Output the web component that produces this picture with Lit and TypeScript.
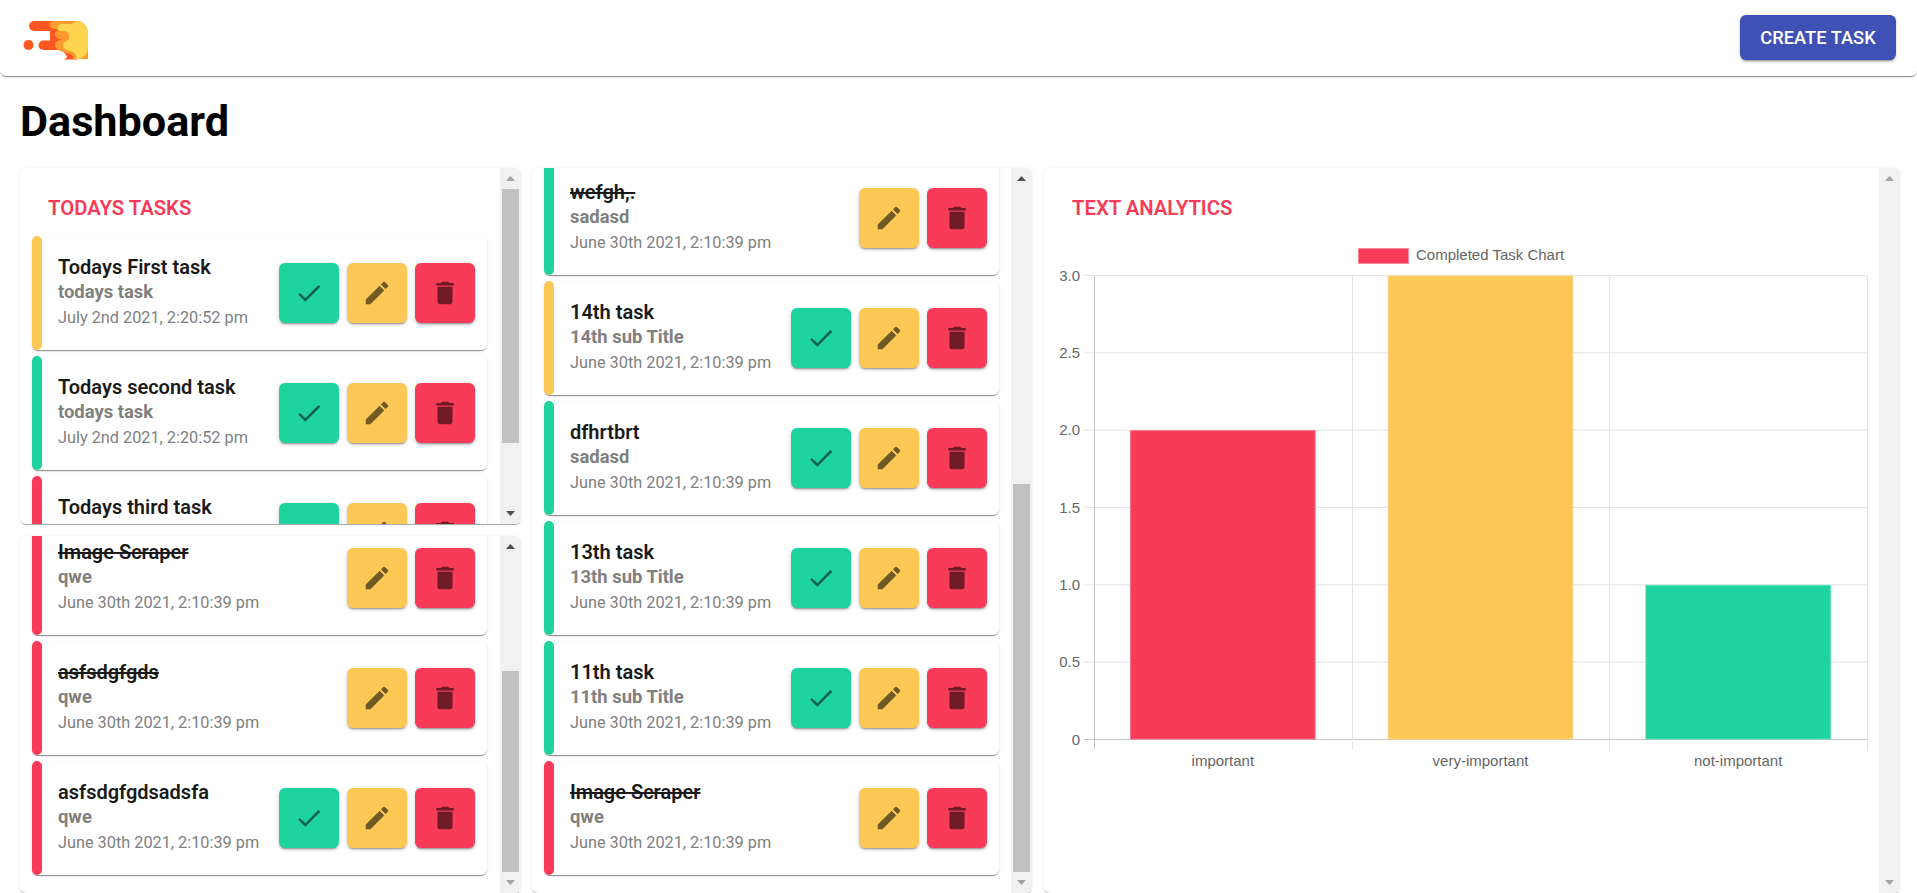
import { LitElement, html, css, svg } from "lit";
import { customElement } from "lit/decorators.js";

type Task = { title: string; sub: string; date: string; tone: "red" | "yellow" | "green"; done?: boolean };
type Thumb = { before: number; size: number; after: number };

const J30 = "June 30th 2021, 2:10:39 pm";
const J2 = "July 2nd 2021, 2:20:52 pm";

const todays: Task[] = [
  { title: "Todays First task", sub: "todays task", date: J2, tone: "yellow" },
  { title: "Todays second task", sub: "todays task", date: J2, tone: "green" },
  { title: "Todays third task", sub: "todays task", date: J2, tone: "red" },
];
const important: Task[] = [
  { title: "Image Scraper", sub: "qwe", date: J30, tone: "red", done: true },
  { title: "asfsdgfgds", sub: "qwe", date: J30, tone: "red", done: true },
  { title: "asfsdgfgdsadsfa", sub: "qwe", date: J30, tone: "red" },
];
const all: Task[] = [
  { title: "wefgh,.", sub: "sadasd", date: J30, tone: "green", done: true },
  { title: "14th task", sub: "14th sub Title", date: J30, tone: "yellow" },
  { title: "dfhrtbrt", sub: "sadasd", date: J30, tone: "green" },
  { title: "13th task", sub: "13th sub Title", date: J30, tone: "green" },
  { title: "11th task", sub: "11th sub Title", date: J30, tone: "green" },
  { title: "Image Scraper", sub: "qwe", date: J30, tone: "red", done: true },
];

const CHECK = "M9 16.17L4.83 12l-1.42 1.41L9 19 21 7l-1.41-1.41z";
const EDIT =
  "M3 17.25V21h3.75L17.81 9.94l-3.75-3.75L3 17.25zM20.71 7.04c.39-.39.39-1.02 0-1.41l-2.34-2.34c-.39-.39-1.02-.39-1.41 0l-1.83 1.83 3.75 3.75 1.83-1.83z";
const TRASH = "M6 19c0 1.1.9 2 2 2h8c1.1 0 2-.9 2-2V7H6v12zM19 4h-3.5l-1-1h-5l-1 1H5v2h14V4z";

const bars = [
  { label: "important", value: 2, color: "#f73b58", edge: "#fb6f85" },
  { label: "very-important", value: 3, color: "#fdc855", edge: "#fdd27a" },
  { label: "not-important", value: 1, color: "#1fd3a0", edge: "#57dfb8" },
];

const PLOT = { left: 50, right: 823, top: 39.5, bottom: 503.5 };

function chart() {
  const w = (PLOT.right - PLOT.left) / 3;
  const h = PLOT.bottom - PLOT.top;
  const ticks = [0, 0.5, 1, 1.5, 2, 2.5, 3];
  return svg`
    <rect x="314.5" y="12.5" width="50" height="15" fill="#f73b58" stroke="#fb8a9c"></rect>
    <text x="372" y="24" class="tick" text-anchor="start">Completed Task Chart</text>
    ${ticks.map((t) => {
      const y = PLOT.bottom - (t / 3) * h;
      return svg`
        <line x1="${PLOT.left - 10}" x2="${PLOT.right}" y1="${y}" y2="${y}" stroke="${t === 0 ? "#c4c4c4" : "#e3e3e3"}"></line>
        <text x="${PLOT.left - 14}" y="${y + 5}" class="tick" text-anchor="end">${t === 0 ? "0" : t.toFixed(1)}</text>`;
    })}
    ${[0, 1, 2, 3].map((i) => {
      const x = Math.round(PLOT.left + i * w) + 0.5;
      return svg`<line x1="${x}" x2="${x}" y1="${PLOT.top}" y2="${PLOT.bottom + 10}" stroke="${i === 0 ? "#c4c4c4" : "#e3e3e3"}"></line>`;
    })}
    ${bars.map((b, i) => {
      const bw = w * 0.72;
      const x = PLOT.left + i * w + (w - bw) / 2;
      const bh = (b.value / 3) * h;
      return svg`
        <rect x="${x + 0.5}" y="${PLOT.bottom - bh + 0.5}" width="${bw - 1}" height="${bh - 1}" fill="${b.color}" stroke="${b.edge}"></rect>
        <text x="${PLOT.left + i * w + w / 2}" y="530" class="tick" text-anchor="middle">${b.label}</text>`;
    })}
  `;
}

@customElement("task-card")
class TaskCard extends LitElement {
  static properties = { task: { attribute: false } };
  task!: Task;
  static styles = css`
    :host { display: block; flex: none; width: 455px; margin-bottom: 6px; }
    .card {
      display: flex; align-items: center; height: 114px; box-sizing: border-box;
      background: #fff; border-radius: 6px; padding-right: 12px;
      box-shadow: 0 2px 1px -1px rgba(0,0,0,.3), 0 1px 1px 0 rgba(0,0,0,.14), 0 1px 3px 0 rgba(0,0,0,.12);
    }
    .bar { width: 10px; height: 100%; border-radius: 6px; flex: none; margin-right: 16px; }
    .red { background: #f73b58; }
    .yellow { background: #fdc855; }
    .green { background: #1fd3a0; }
    .text { flex: 1; min-width: 0; font-family: Roboto, sans-serif; line-height: 25px; white-space: nowrap; margin-top: -2px; }
    .title { font-size: 20px; font-weight: 600; color: #1a1a1a; }
    .done { text-decoration: line-through; }
    .sub { font-size: 18.4px; font-weight: 700; color: #808080; line-height: 24px; margin-bottom: 1px; }
    .date { font-size: 16.3px; color: #808080; }
    .actions { display: flex; gap: 8px; flex: none; }
    .btn {
      width: 60px; height: 60px; border: 0; padding: 0; border-radius: 6px;
      display: flex; align-items: center; justify-content: center;
      box-shadow: 0 3px 1px -2px rgba(0,0,0,.2), 0 2px 2px 0 rgba(0,0,0,.14), 0 1px 5px 0 rgba(0,0,0,.12);
    }
    .btn svg { width: 30px; height: 30px; fill: rgba(0,0,0,.55); display: block; }
  `;
  icon(d: string) {
    return html`<svg viewBox="0 0 24 24"><path d="${d}"></path></svg>`;
  }
  render() {
    const t = this.task;
    return html`<div class="card">
      <div class="bar ${t.tone}"></div>
      <div class="text">
        <div class="title ${t.done ? "done" : ""}">${t.title}</div>
        <div class="sub">${t.sub}</div>
        <div class="date">${t.date}</div>
      </div>
      <div class="actions">
        ${t.done ? "" : html`<button class="btn green">${this.icon(CHECK)}</button>`}
        <button class="btn yellow">${this.icon(EDIT)}</button>
        <button class="btn red">${this.icon(TRASH)}</button>
      </div>
    </div>`;
  }
}

@customElement("app-root")
class AppRoot extends LitElement {
  static styles = css`
    :host { display: flex; flex-direction: column; height: 100vh; overflow: hidden; background: #fff; font-family: Roboto, sans-serif; }
    header {
      flex: none; height: 76px; box-sizing: border-box; display: flex; align-items: center; justify-content: space-between;
      padding: 0 21px 1px 20px; background: #fff; border-radius: 0 0 6px 6px;
      box-shadow: 0 2px 1px -1px rgba(0,0,0,.3), 0 1px 1px 0 rgba(0,0,0,.14), 0 1px 3px 0 rgba(0,0,0,.12);
    }
    .logo { width: 72px; height: 50px; display: block; }
    .create {
      width: 156px; height: 45px; border: 0; border-radius: 6px; background: #3f51b5; color: #fff;
      font: 500 18.3px Roboto, sans-serif; text-transform: uppercase; padding: 0;
      box-shadow: 0 3px 1px -2px rgba(0,0,0,.2), 0 2px 2px 0 rgba(0,0,0,.14), 0 1px 5px 0 rgba(0,0,0,.12);
    }
    h1 { margin: 0; flex: none; height: 92px; box-sizing: border-box; padding: 21px 0 0 20px; font-size: 43.2px; line-height: 50px; font-weight: 700; color: #000; }
    main { flex: 1; min-height: 0; display: flex; gap: 11px; padding-left: 20px; }
    .stack { flex: none; width: 501px; display: grid; grid-template-rows: 356px 1fr; row-gap: 12px; min-height: 0; }
    .mid { flex: none; width: 500px; }
    .right { flex: none; width: 856px; margin-left: 1px; }
    .panel {
      display: flex; min-height: 0; overflow: hidden; background: #fff; border-radius: 6px;
      box-shadow: 0 2px 1px -1px rgba(0,0,0,.3), 0 1px 1px 0 rgba(0,0,0,.06), 0 0 3px 0 rgba(0,0,0,.08);
    }
    .view { flex: 1; min-width: 0; display: flex; flex-direction: column; overflow: hidden; }
    .view.end { justify-content: flex-end; }
    .scrollbar { flex: none; width: 21px; display: flex; flex-direction: column; background: #f1f1f1; }
    .arrow { flex: none; height: 21px; display: block; }
    .arrow path { fill: #505050; }
    .arrow.off path { fill: #a3a3a3; }
    .track { flex: 1; min-height: 0; display: flex; flex-direction: column; }
    .thumb { margin: 0 2px; background: #c1c1c1; }
    h2 {
      margin: 0; flex: none; height: 68px; box-sizing: border-box; padding: 23px 0 0 28px; font-size: 20.3px; line-height: 34px; font-weight: 600;
      color: #f73b58; text-transform: uppercase;
    }
    .list { flex: none; display: flex; flex-direction: column; padding: 0 0 12px 12px; }
    .chart { display: block; flex: none; width: 835px; height: 560px; }
    .chart .tick { font: 15px "Liberation Sans", Arial, sans-serif; fill: #666; }
  `;

  list(tasks: Task[]) {
    return html`<div class="list">${tasks.map((t) => html`<task-card .task=${t}></task-card>`)}</div>`;
  }

  scrollbar(thumb: Thumb | null) {
    const upOff = !thumb || thumb.before === 0;
    const downOff = !thumb || thumb.after === 0;
    return html`<div class="scrollbar">
      <svg class="arrow ${upOff ? "off" : ""}" viewBox="0 0 21 21"><path d="M10.5 8L15 13H6z"></path></svg>
      <div class="track">
        ${thumb
          ? html`<div style="height:${thumb.before}px;flex:none"></div>
              <div class="thumb" style="height:${thumb.size}px;flex:none"></div>`
          : ""}
      </div>
      <svg class="arrow ${downOff ? "off" : ""}" viewBox="0 0 21 21"><path d="M10.5 13L15 8H6z"></path></svg>
    </div>`;
  }

  render() {
    return html`
      <header>
        <svg class="logo" viewBox="20 10 72 50" aria-label="logo">
          <circle cx="28.5" cy="42" r="5" fill="#ff5722"></circle>
          <rect x="29" y="18" width="34" height="10" rx="5" fill="#ff5722"></rect>
          <rect x="50" y="18" width="12" height="29" fill="#ff5722"></rect>
          <rect x="38.5" y="37.5" width="30" height="9.5" rx="4.7" fill="#ff5722"></rect>
          <path d="M63 48H77V56.5H63C66 56 68 54.5 66 52Z" fill="#ff5722"></path>
          <path d="M54 18H77C84 18 88 24 88 31V56H73C74 53 71 51 68 50.5C64 49.5 55 47 55 42C55 38 60 36.5 62 37C58 36 55 34 55 31C55 28.5 57 27 59 26.5L54 26C48 25 47.5 19 54 18Z" fill="#ff9a2e"></path>
          <path d="M61.5 21H72C74 19 76 18 77 18C84 18 88 24 88 31V43C88 51 84 56 76.5 56.5C77 52 75 49.5 72 48.5C67 47.5 63 46 63 42C63 39.5 66 37.5 69 36.5C70 33 68.5 29 65 28H61.5C56 28 56 21 61.5 21Z" fill="#ffd54f"></path>
        </svg>
        <button class="create">Create Task</button>
      </header>
      <h1>Dashboard</h1>
      <main>
        <div class="stack">
          <section class="panel">
            <div class="view"><h2>Todays Tasks</h2>${this.list(todays)}</div>
            ${this.scrollbar({ before: 0, size: 254, after: 60 })}
          </section>
          <section class="panel">
            <div class="view end">${this.list(important)}</div>
            ${this.scrollbar({ before: 114, size: 201, after: 0 })}
          </section>
        </div>
        <section class="panel mid">
          <div class="view end">${this.list(all)}</div>
          ${this.scrollbar({ before: 295, size: 388, after: 0 })}
        </section>
        <section class="panel right">
          <div class="view">
            <h2>Text Analytics</h2>
            <svg class="chart" viewBox="0 0 835 560">${chart()}</svg>
          </div>
          ${this.scrollbar(null)}
        </section>
      </main>
    `;
  }
}
